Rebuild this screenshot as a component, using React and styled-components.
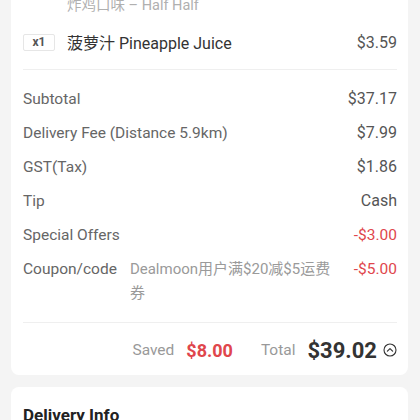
import React from 'react';
import styled, { createGlobalStyle } from 'styled-components';

const GlobalStyle = createGlobalStyle`
  html, body {
    margin: 0;
    padding: 0;
    background: #f4f4f4;
    font-family: Roboto, "Noto Sans CJK SC", sans-serif;
    -webkit-font-smoothing: antialiased;
  }
`;

const RED = '#e0464c';

const summary = [
  { label: 'Subtotal', value: '$37.17' },
  { label: 'Delivery Fee (Distance 5.9km)', value: '$7.99' },
  { label: 'GST(Tax)', value: '$1.86' },
  { label: 'Tip', value: 'Cash' },
  { label: 'Special Offers', value: '-$3.00', discount: true },
  { label: 'Coupon/code', note: 'Dealmoon用户满$20减$5运费券', value: '-$5.00', discount: true },
];

export default function App() {
  return (
    <Page>
      <GlobalStyle />
      <Card $top>
        <ItemOption>炸鸡口味 – Half Half</ItemOption>
        <ItemRow>
          <Qty>x1</Qty>
          <ItemName>菠萝汁 Pineapple Juice</ItemName>
          <Amount>$3.59</Amount>
        </ItemRow>
        <Divider />
        <SummaryList>
          {summary.map(row => (
            <SummaryRow key={row.label}>
              <Label>{row.label}</Label>
              {row.note ? <Note>{row.note}</Note> : <Spacer />}
              <Amount $red={row.discount}>{row.value}</Amount>
            </SummaryRow>
          ))}
        </SummaryList>
        <Divider />
        <TotalRow>
          <Muted>Saved</Muted>
          <SavedAmount>$8.00</SavedAmount>
          <Muted $wide>Total</Muted>
          <TotalAmount>$39.02</TotalAmount>
          <Toggle viewBox="0 0 14 14" aria-hidden="true">
            <circle cx="7" cy="7" r="6" fill="none" stroke="#333" strokeWidth="1.1" />
            <polyline points="4.4,8.2 7,5.6 9.6,8.2" fill="none" stroke="#333" strokeWidth="1.2" strokeLinecap="round" strokeLinejoin="round" />
          </Toggle>
        </TotalRow>
      </Card>
      <Card>
        <SectionTitle>Delivery Info</SectionTitle>
      </Card>
    </Page>
  );
}

const Page = styled.div`
  display: flex;
  flex-direction: column;
  gap: 12px;
  padding: 0 12px 0 11px;
  height: 420px;
  overflow: hidden;
`
const Card = styled.section`
  background: #fff;
  border-radius: ${props => props.$top ? '0 0 8px 8px' : '8px 8px 0 0'};
  padding: ${props => props.$top ? '0 11px 10px 12px' : '18px 11px 20px 12px'};
  flex-shrink: 0;
`
const ItemOption = styled.div`
  margin: -4px 0 0 44px;
  font-size: 14.5px;
  line-height: 20px;
  color: #b0b0b0;
`
const ItemRow = styled.div`
  display: flex;
  align-items: center;
  height: 32px;
  margin-top: 10px;
`
const Qty = styled.span`
  box-sizing: border-box;
  width: 32px;
  height: 17px;
  border: 1px solid #e6e6e6;
  border-radius: 2px;
  font-size: 12px;
  font-weight: 700;
  line-height: 15px;
  color: #555;
  text-align: center;
  margin-right: 12px;
`
const ItemName = styled.span`
  flex: 1;
  font-size: 16px;
  color: #333;
`
const Amount = styled.span`
  font-size: ${props => props.$red ? '15.5px' : '16px'};
  color: ${props => props.$red ? RED : '#555'};
  white-space: nowrap;
`
const Divider = styled.hr`
  border: 0;
  height: 1px;
  background: #efefef;
  margin: 11px 0 12px;
`
const SummaryList = styled.div`
  display: flex;
  flex-direction: column;
`
const SummaryRow = styled.div`
  display: flex;
  align-items: flex-start;
  padding: 6px 0;
  line-height: 22px;
  font-size: 15.5px;
`
const Label = styled.span`
  color: #666;
  white-space: nowrap;
`
const Spacer = styled.span`
  flex: 1;
`
const Note = styled.span`
  flex: 1;
  max-width: 212px;
  margin: -1px 12px 0 13px;
  color: #9a9a9a;
  line-height: 24px;
  font-size: 15px;
`
const TotalRow = styled.div`
  display: flex;
  align-items: center;
  justify-content: flex-end;
  height: 30px;
`
const Muted = styled.span`
  font-size: 15.5px;
  color: #999;
  margin: ${props => props.$wide ? '0 12px 0 28px' : '0 12px 0 0'};
`
const SavedAmount = styled.span`
  font-size: 18px;
  font-weight: 700;
  color: ${RED};
`
const TotalAmount = styled.span`
  font-size: 22px;
  font-weight: 700;
  color: #333;
  margin-right: 6px;
`
const Toggle = styled.svg`
  width: 14px;
  height: 14px;
`
const SectionTitle = styled.h2`
  margin: 0;
  font-size: 17px;
  font-weight: 700;
  color: #222;
`
